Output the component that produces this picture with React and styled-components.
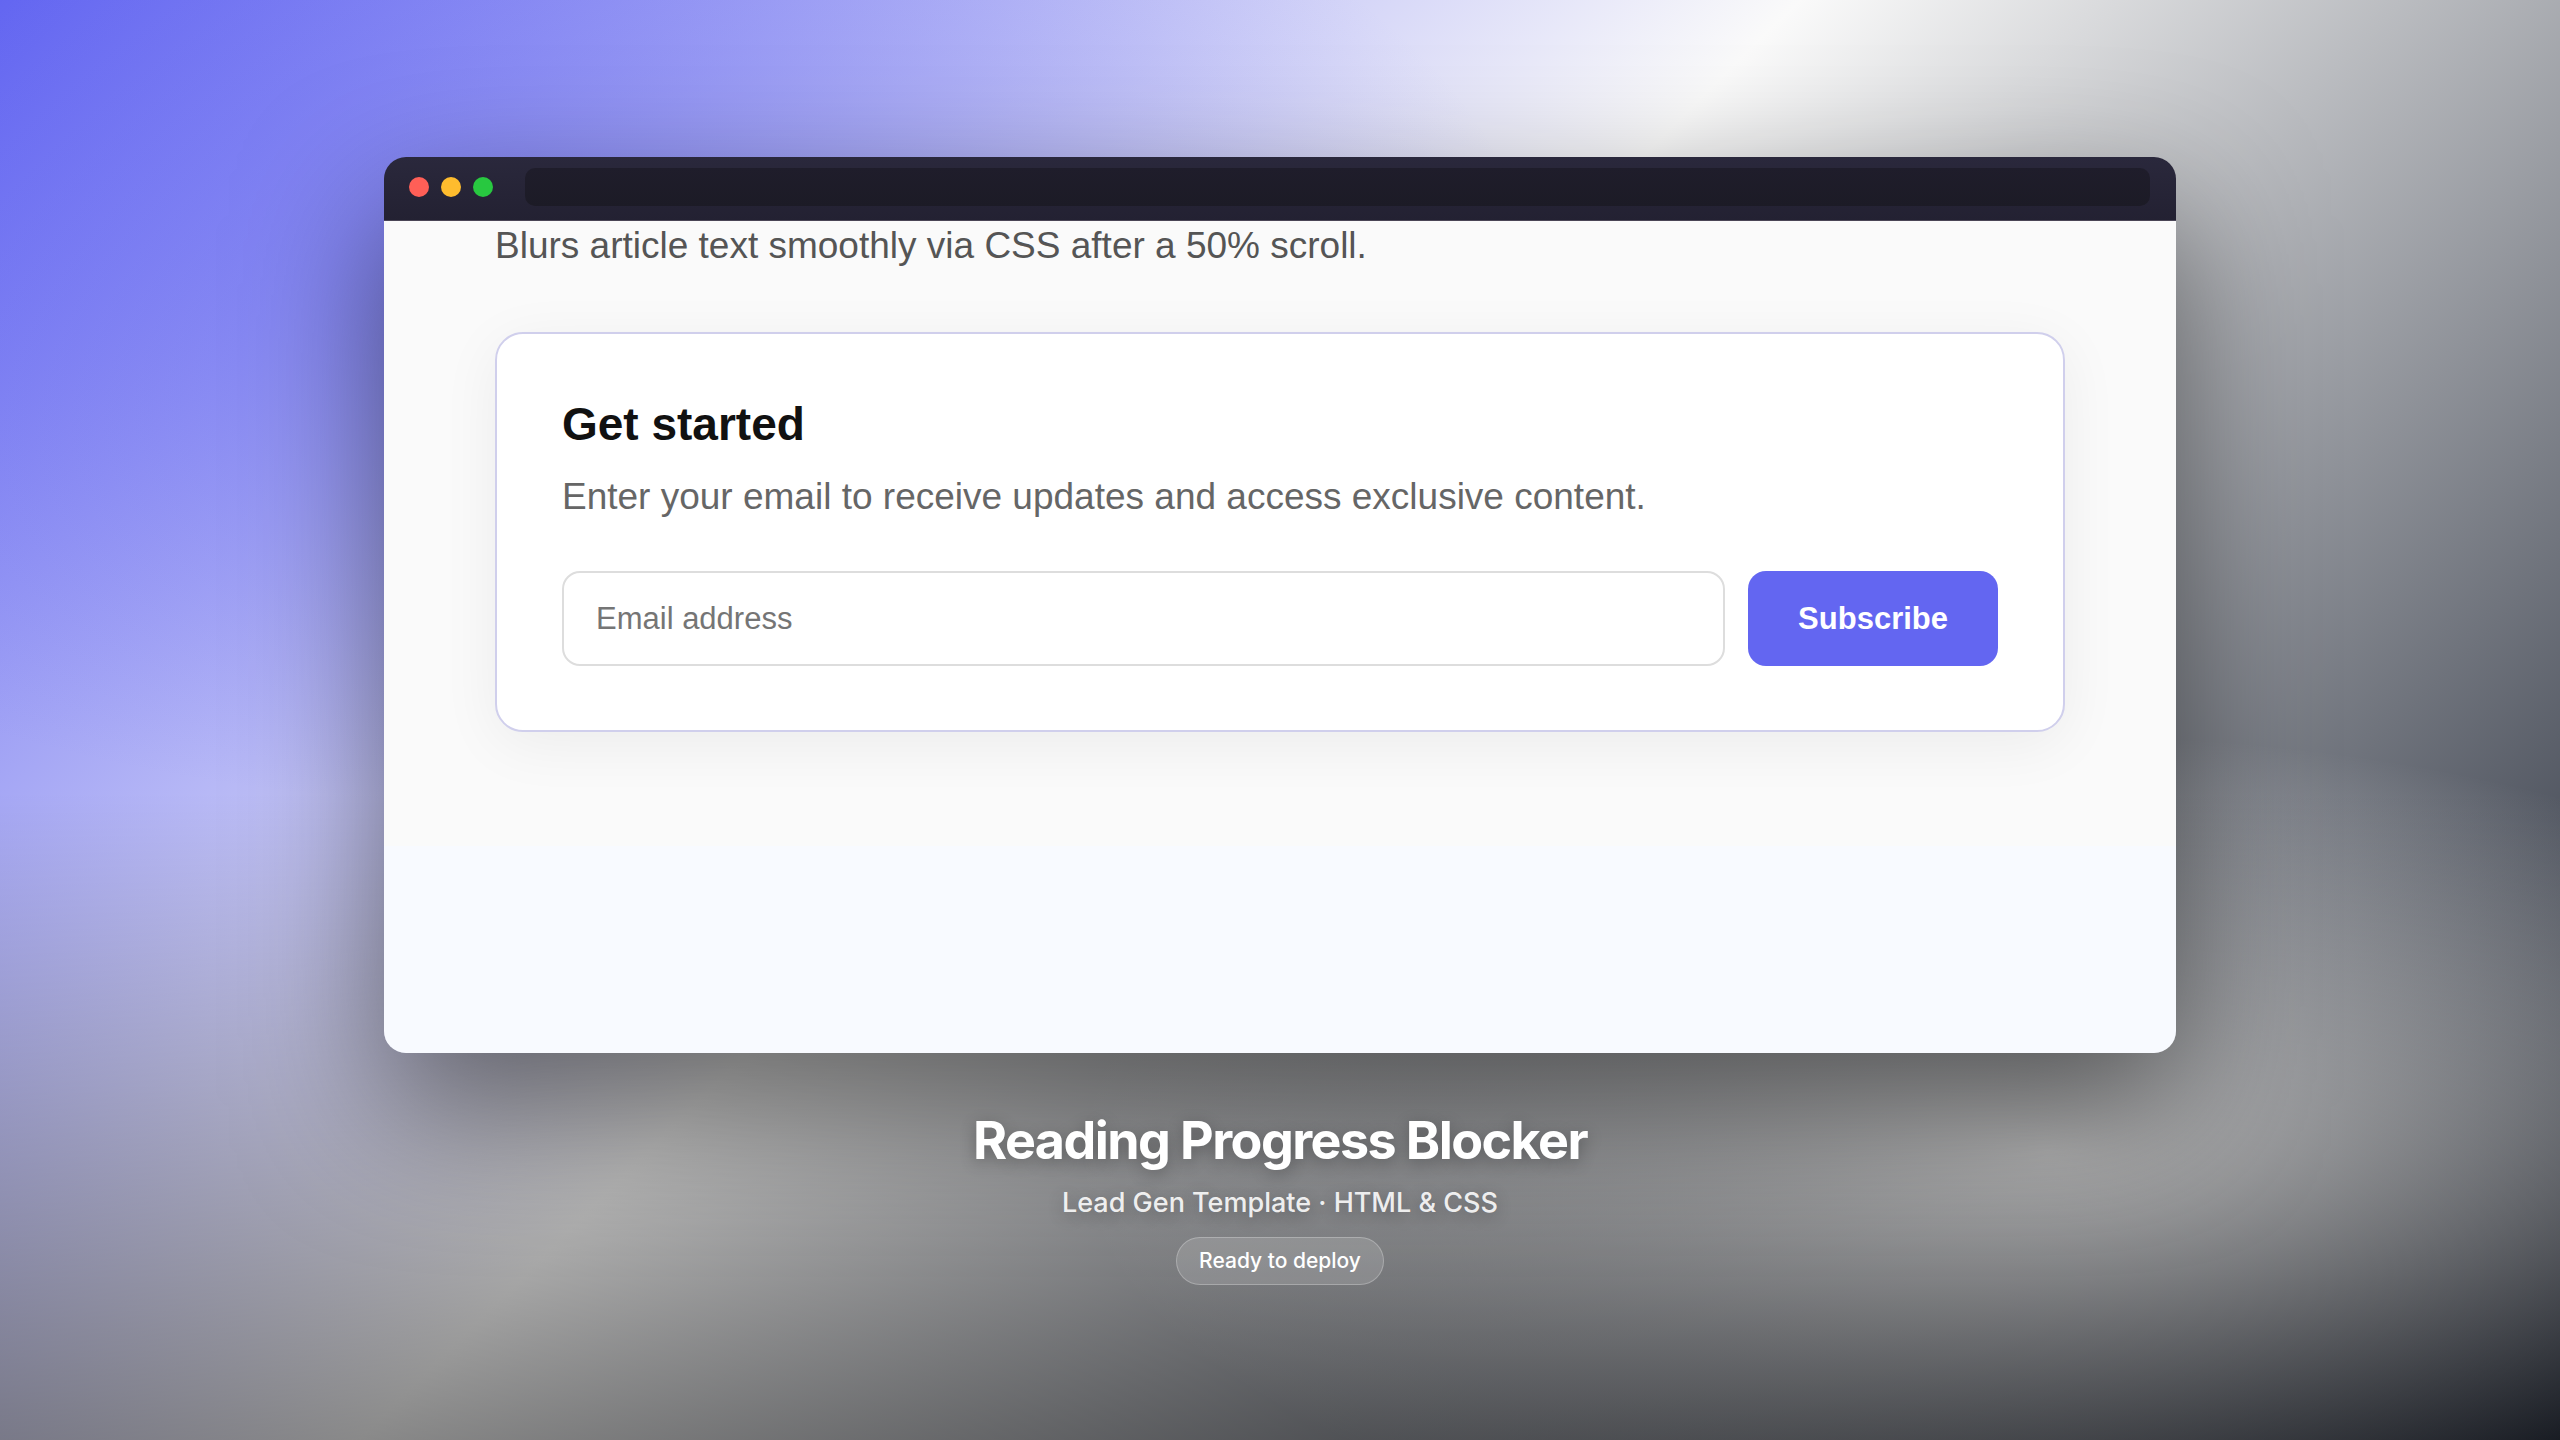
import React from 'react';
import styled, { createGlobalStyle } from 'styled-components';

const GlobalStyle = createGlobalStyle`
  *, *::before, *::after {
    box-sizing: border-box;
  }

  body {
    margin: 0;
  }
`;

const Stage = styled.main`
  display: flex;
  flex-direction: column;
  align-items: center;
  justify-content: center;
  gap: 56px;
  min-height: 100vh;
  padding-top: 2px;
  font-family: Inter, 'Liberation Sans', sans-serif;
  background:
    linear-gradient(to bottom, transparent 55%, rgba(0, 0, 0, 0.45) 100%),
    radial-gradient(ellipse 38% 29% at 80% 80%, rgba(250, 250, 250, 0.92), rgba(250, 250, 250, 0)),
    radial-gradient(ellipse 40% 36% at 20% 20%, rgba(99, 102, 241, 0.4), rgba(99, 102, 241, 0)),
    linear-gradient(135deg, #6366f1 0%, #fafafa 45%, #111827 100%);
`;

const Browser = styled.section`
  display: flex;
  flex-direction: column;
  width: 70%;
  aspect-ratio: 2 / 1;
  border-radius: 22px;
  overflow: hidden;
  box-shadow: 0 56px 140px rgba(0, 0, 0, 0.5);
`;

const TitleBar = styled.header`
  display: flex;
  align-items: center;
  gap: 32px;
  padding: 11px 26px 14px 25px;
  border-bottom: 1px solid #4a4556;
  background: linear-gradient(#2a283c, #232132);
`;

const Lights = styled.div`
  display: flex;
  gap: 12px;
`;

const Light = styled.span`
  width: 20px;
  height: 20px;
  border-radius: 50%;
  background: ${props => props.color};
`;

const AddressBar = styled.div`
  flex-grow: 1;
  height: 38px;
  border-radius: 10px;
  background: linear-gradient(#1f1d2b, #1c1b26);
`;

const Page = styled.div`
  flex-grow: 1;
  background: #f8faff;
  font-family: 'Liberation Sans', Arial, sans-serif;
`;

const Article = styled.article`
  padding: 2px 111px 114px;
  background: #fafafa;
`;

const Intro = styled.p`
  margin: 0 0 63px;
  color: #555;
  font-size: 37px;
  line-height: 46px;
`;

const Card = styled.section`
  padding: 64px 65px;
  border: 2px solid #d0cfec;
  border-radius: 28px;
  background: #fff;
  box-shadow: 0 12px 60px rgba(0, 0, 0, 0.06);
`;

const CardTitle = styled.h2`
  margin: 0 0 15px;
  color: #111;
  font-size: 46px;
  line-height: 52px;
`;

const CardText = styled.p`
  margin: 0 0 42px;
  color: #666;
  font-size: 37px;
  line-height: 64px;
`;

const Form = styled.form`
  display: flex;
  gap: 23px;
`;

const Input = styled.input`
  flex-grow: 1;
  height: 95px;
  padding: 0 32px;
  border: 2px solid #ddd;
  border-radius: 18px;
  background: #fff;
  font: 31px 'Liberation Sans', Arial, sans-serif;

  &::placeholder {
    color: #757575;
  }
`;

const Button = styled.button`
  padding: 0 50px;
  border: 0;
  border-radius: 18px;
  background: #6366f1;
  color: #fff;
  font: bold 31px 'Liberation Sans', Arial, sans-serif;
`;

const Caption = styled.footer`
  display: flex;
  flex-direction: column;
  align-items: center;
  color: #fff;
  text-shadow: 0 4px 16px rgba(0, 0, 0, 0.3);
`;

const Name = styled.h1`
  margin: 0 0 12px;
  font-size: 52px;
  font-weight: 700;
  line-height: 64px;
  letter-spacing: -0.03em;
`;

const Kind = styled.p`
  margin: 0 0 16px;
  color: rgba(255, 255, 255, 0.9);
  font-size: 27px;
  font-weight: 500;
  line-height: 36px;
`;

const Badge = styled.span`
  padding: 10px 22px;
  border: 1px solid rgba(255, 255, 255, 0.25);
  border-radius: 24px;
  background: rgba(255, 255, 255, 0.14);
  font-size: 21px;
  font-weight: 500;
  line-height: 26px;
  text-shadow: none;
`;

const SubscribeForm = () => (
  <Form onSubmit={e => e.preventDefault()}>
    <Input type="email" placeholder="Email address" aria-label="Email address" />
    <Button type="submit">Subscribe</Button>
  </Form>
);

const App = () => (
  <Stage>
    <GlobalStyle />
    <Browser>
      <TitleBar>
        <Lights>
          <Light color="#ff5f57" />
          <Light color="#febc2e" />
          <Light color="#28c840" />
        </Lights>
        <AddressBar />
      </TitleBar>
      <Page>
        <Article>
          <Intro>Blurs article text smoothly via CSS after a 50% scroll.</Intro>
          <Card>
            <CardTitle>Get started</CardTitle>
            <CardText>Enter your email to receive updates and access exclusive content.</CardText>
            <SubscribeForm />
          </Card>
        </Article>
      </Page>
    </Browser>
    <Caption>
      <Name>Reading Progress Blocker</Name>
      <Kind>Lead Gen Template · HTML &amp; CSS</Kind>
      <Badge>Ready to deploy</Badge>
    </Caption>
  </Stage>
);

export default App;
